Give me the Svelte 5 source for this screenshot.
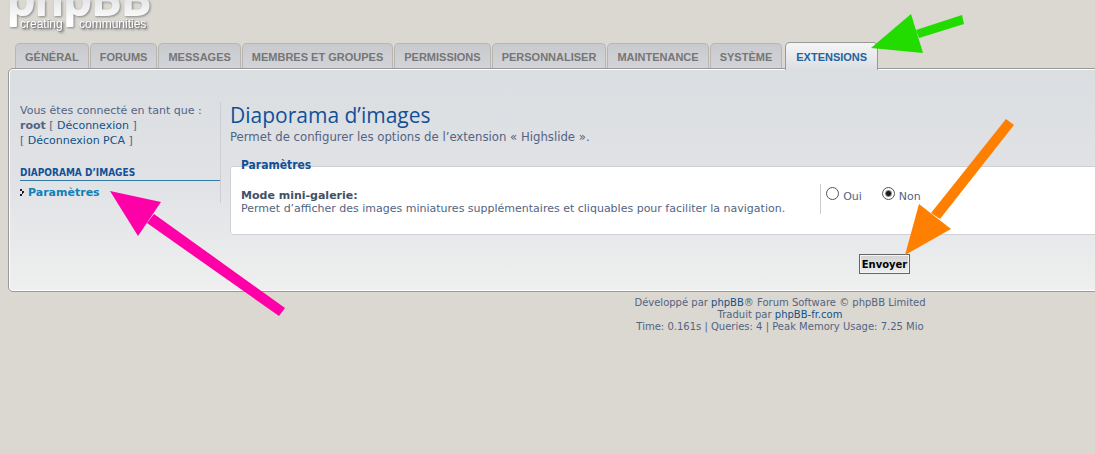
<script lang="ts">
  const tabs = [
    'Général',
    'Forums',
    'Messages',
    'Membres et groupes',
    'Permissions',
    'Personnaliser',
    'Maintenance',
    'Système',
    'Extensions',
  ]
  let active = $state('Extensions')
  let thumbMode = $state('0')

  // callout arrows laid over the page: head, then shaft
  const arrows = [
    { color: 'pink', head: '110,191 161,202 138,236', shaft: '154,214 285,308 279,316 147,223' },
    { color: 'green', head: '871,48 911,14 923,53', shaft: '916,30 962,15 964,24 919,38' },
    { color: 'orange', head: '905,255 919,204 951,229', shaft: '1006,119 1014,125 940,219 931,213' },
  ]
</script>

<div class="page">
  <header>
    <a href="#home" aria-label="phpBB creating communities">
      <svg class="logo" width="160" height="34" viewBox="0 0 160 34">
        <defs>
          <linearGradient id="logo-fill" gradientUnits="userSpaceOnUse" x1="0" y1="-6" x2="0" y2="22">
            <stop offset="0" stop-color="#dfe0e3" />
            <stop offset="1" stop-color="#fff" />
          </linearGradient>
        </defs>
        <text class="brand" x="-1" y="15">phpBB</text>
        <text class="motto" x="12" y="28">creating</text>
        <text class="motto" x="71" y="28">communities</text>
      </svg>
    </a>
  </header>

  <nav class="tabs">
    {#each tabs as tab}
      <a href="#{tab}" class="tab" class:active={tab === active} onclick={() => (active = tab)}>{tab}</a>
    {/each}
  </nav>

  <div class="panel">
    <aside class="menu">
      <p>
        Vous êtes connecté en tant que :<br />
        <strong>root</strong> [ <a href="#logout">Déconnexion</a> ]<br />
        [ <a href="#logout-pca">Déconnexion PCA</a> ]
      </p>
      <h2>Diaporama d’images</h2>
      <a class="entry" href="#settings">
        <svg width="5" height="7" viewBox="0 0 5 7" aria-hidden="true">
          <path d="M0 0h2v2H0zM2 2h2v2H2zM0 5h2v2H0zM2 4h1v1H2z" />
        </svg>
        Paramètres
      </a>
    </aside>

    <main>
      <h1>Diaporama d’images</h1>
      <p class="intro">Permet de configurer les options de l’extension « Highslide ».</p>
      <form onsubmit={(e) => e.preventDefault()}>
        <fieldset>
          <legend>Paramètres</legend>
          <div class="setting">
            <div class="about">
              <label for="thumb_yes">Mode mini-galerie:</label>
              <span>Permet d’afficher des images miniatures supplémentaires et cliquables pour faciliter la navigation.</span>
            </div>
            <div class="choices">
              <label><input id="thumb_yes" type="radio" name="thumb" value="1" bind:group={thumbMode} /> Oui</label>
              <label><input type="radio" name="thumb" value="0" bind:group={thumbMode} /> Non</label>
            </div>
          </div>
        </fieldset>
        <div class="submit">
          <button type="submit">Envoyer</button>
        </div>
      </form>
    </main>
  </div>

  <footer>
    Développé par <a href="#phpbb">phpBB</a>® Forum Software © phpBB Limited<br />
    Traduit par <a href="#phpbb-fr">phpBB-fr.com</a><br />
    Time: 0.161s | Queries: 4 | Peak Memory Usage: 7.25 Mio
  </footer>

  <svg class="arrows" width="1095" height="454" viewBox="0 0 1095 454" aria-hidden="true">
    {#each arrows as arrow}
      <g class={arrow.color}>
        <polygon points={arrow.head} />
        <polygon points={arrow.shaft} />
      </g>
    {/each}
  </svg>
</div>

<style>
  :global(body) {
    background: #dbd7d1;
    overflow-x: hidden;
  }

  .page {
    position: relative;
    box-sizing: border-box;
    min-width: 1560px;
    padding: 0 8px;
    font-family: Verdana, 'DejaVu Sans', sans-serif;
    font-size: 11px;
    line-height: 15px;
    color: #536482;
  }

  a {
    color: #105289;
    text-decoration: none;
  }

  header {
    height: 42px;
  }

  .logo {
    display: block;
    filter: drop-shadow(1px 1px 1px #888);
  }

  .brand {
    font-family: 'Open Sans', sans-serif;
    font-size: 45px;
    font-weight: 600;
    fill: url(#logo-fill);
    stroke: url(#logo-fill);
    stroke-width: 2px;
    stroke-linejoin: round;
  }

  .motto {
    font-family: 'Liberation Sans', Arial, sans-serif;
    font-size: 12px;
    fill: #fff;
    filter: drop-shadow(1px 1px 0 #888);
  }

  .tabs {
    display: flex;
    align-items: flex-end;
    gap: 1px;
    height: 27px;
    padding-left: 7px;
    margin-bottom: -1px;
    position: relative;
    z-index: 1;
  }

  .tab {
    box-sizing: border-box;
    height: 25px;
    margin-bottom: 1px;
    padding: 0 9px;
    border: 1px solid #b9b6b2;
    border-bottom: 0;
    border-radius: 5px 5px 0 0;
    background: linear-gradient(#c9cacd, #d3d4d9);
    font: bold 11px/27px 'Liberation Sans', Arial, sans-serif;
    text-transform: uppercase;
    white-space: nowrap;
    color: #767676;
  }

  .tab.active {
    height: 28px;
    margin: 0 0 -1px 2px;
    padding: 0 10px;
    border-color: #999;
    background: linear-gradient(#f4f5f5, #dcdee2);
    line-height: 29px;
    color: #23649f;
  }

  .panel {
    display: flex;
    gap: 9px;
    box-sizing: border-box;
    min-height: 224px;
    padding: 33px 12px 16px 11px;
    border: 1px solid #999;
    border-radius: 5px;
    box-shadow: inset 0 0 0 1px #fff;
    background: linear-gradient(#dadee1, #e1e2e6 50%, #eeefee);
  }

  .menu {
    box-sizing: border-box;
    flex: 0 0 201px;
    height: 101px;
    padding-top: 1px;
    border-right: 1px solid #ccced3;
  }

  .menu p {
    margin: 0;
  }

  h2 {
    margin: 17px 0 4px;
    border-bottom: 1px solid #327aa5;
    font: bold 10px/15px Tahoma, 'DejaVu Sans Condensed', sans-serif;
    text-transform: uppercase;
    color: #115098;
  }

  .entry {
    display: flex;
    align-items: center;
    gap: 3px;
    font-weight: bold;
    color: #0f80b8;
  }

  .entry svg {
    fill: #222;
  }

  main {
    flex: 1;
    min-width: 0;
  }

  h1 {
    margin: 0;
    font: 21px/27px 'Trebuchet MS', 'Open Sans', sans-serif;
    color: #115098;
  }

  .intro {
    margin: 0 0 22px;
    font-family: Tahoma, 'DejaVu Sans Condensed', sans-serif;
    font-size: 13px;
  }

  form {
    margin: 0;
  }

  fieldset {
    position: relative;
    box-sizing: border-box;
    height: 69px;
    margin: 0;
    padding: 17px 10px;
    border: 1px solid #d0d1d4;
    border-radius: 3px;
    background: #fff;
  }

  legend {
    position: absolute;
    top: -9px;
    left: 10px;
    padding: 0;
    font: bold 12px/15px Tahoma, 'DejaVu Sans Condensed', sans-serif;
    color: #115098;
  }

  .setting {
    display: flex;
  }

  .about {
    box-sizing: border-box;
    flex: 0 0 45%;
    padding-top: 5px;
    line-height: 13px;
  }

  .about label {
    display: block;
    font-weight: bold;
    color: #425067;
  }

  .choices {
    display: flex;
    gap: 20px;
    height: 30px;
    padding-left: 5px;
    border-left: 1px solid #ccc;
  }

  .choices label {
    display: flex;
    align-items: flex-start;
    gap: 4px;
    line-height: 25px;
  }

  input {
    appearance: none;
    box-sizing: border-box;
    width: 13px;
    height: 13px;
    margin: 3px 0 0;
    border: 1px solid #555;
    border-radius: 50%;
    background: #fff;
  }

  input:checked {
    background: radial-gradient(circle, #1a1a1a 2px, #fff 4px);
  }

  .submit {
    margin-top: 19px;
    text-align: center;
  }

  button {
    display: inline-block;
    height: 20px;
    padding: 2px 2px 0;
    border: 1px solid #666;
    background: linear-gradient(#d2d2d2, #efefef);
    box-shadow: inset 0 0 0 1px #f4f4f4;
    font: bold 10px/16px Verdana, 'DejaVu Sans', sans-serif;
    color: #000;
  }

  footer {
    padding-top: 5px;
    font-size: 10px;
    line-height: 12px;
    text-align: center;
  }

  .arrows {
    position: absolute;
    top: 0;
    left: 0;
    z-index: 2;
    pointer-events: none;
  }

  .pink {
    fill: #ff00a8;
  }

  .green {
    fill: #22dc00;
  }

  .orange {
    fill: #ff8000;
  }
</style>
